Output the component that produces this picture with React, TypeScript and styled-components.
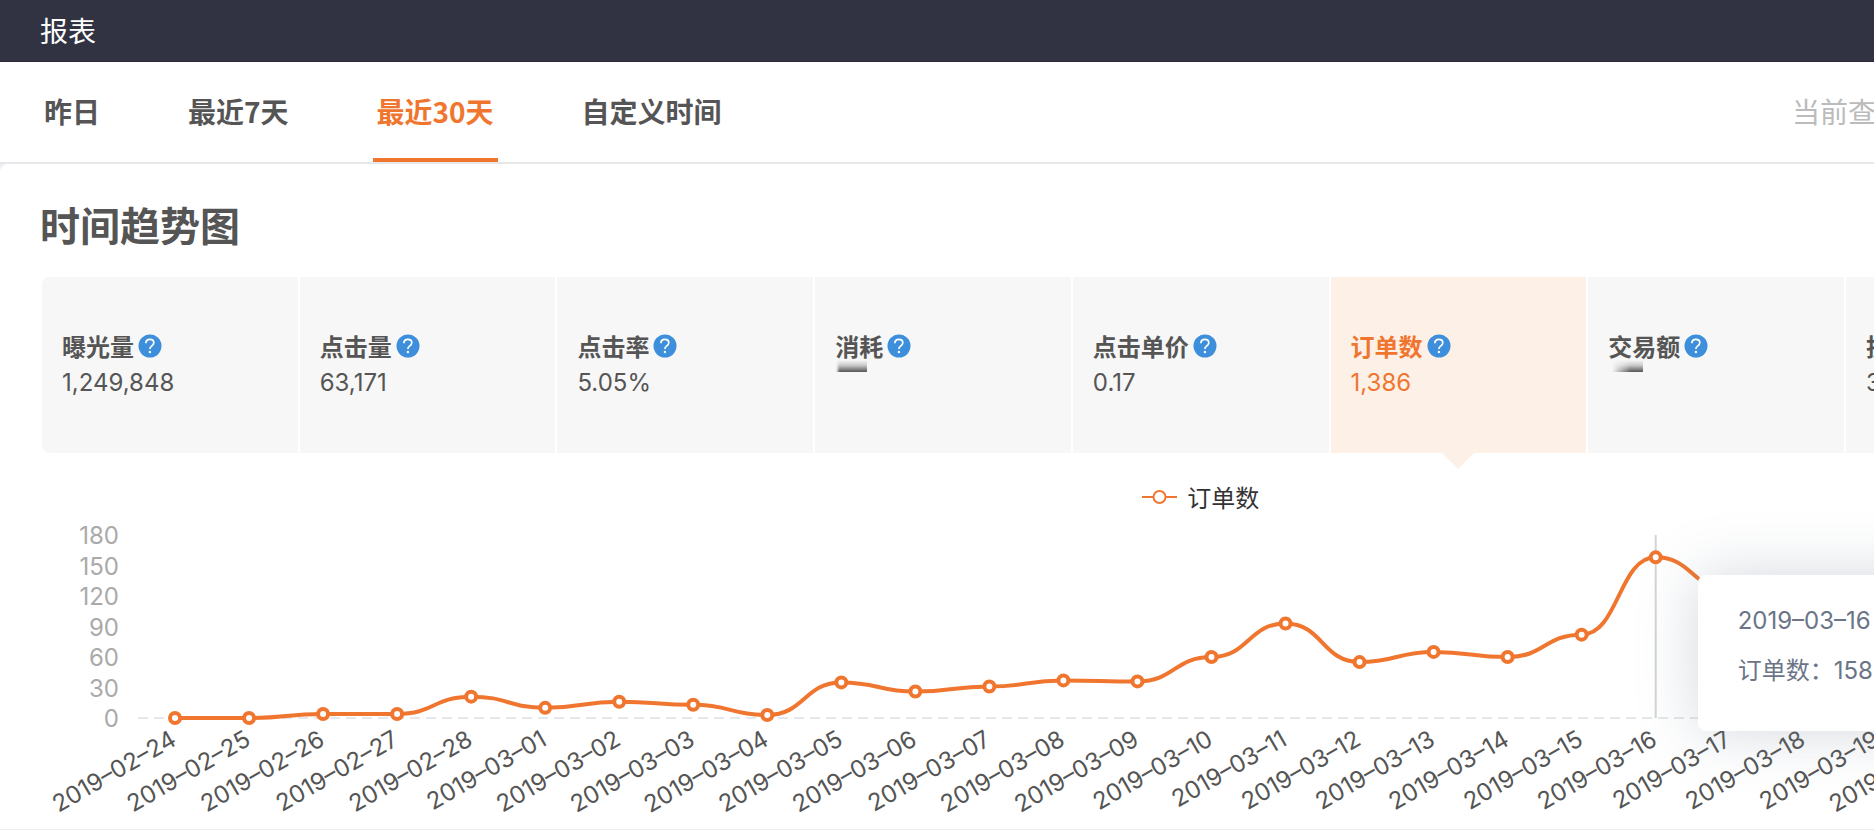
import React, { useLayoutEffect, useRef, useState } from 'react';
import styled, { createGlobalStyle, css } from 'styled-components';

const orange = '#f0762f';
const ink = '#555';
const numerals = '"Inter", "Noto Sans CJK SC", sans-serif';

const GlobalStyle = createGlobalStyle`
  *, *::before, *::after { box-sizing: border-box; }
  body {
    margin: 0;
    background: #fff;
    color: ${ink};
    font-family: "Noto Sans CJK SC", sans-serif;
    font-size: 24px;
    line-height: 36px;
    overflow-x: hidden;
  }
  button { font: inherit; color: inherit; background: none; border: 0; padding: 0; cursor: pointer; }
`;

const Page = styled.div`
  min-height: 100vh;
  overflow: hidden;
  background: #eceef3;
`;

const TopBar = styled.header`
  display: flex;
  align-items: center;
  height: 62px;
  padding: 0 40px 2px;
  background: #313342;
  color: #fff;
  font-size: 28px;
  border-bottom: 1px solid #2f2838;
`;

const Toolbar = styled.div`
  display: flex;
  height: 102px;
  padding-left: 40px;
  background: #fff;
  border-bottom: 2px solid #e6e7e9;
  overflow: hidden;
`;

const Tabs = styled.nav`
  display: flex;
  flex: 1;
  gap: 80px;
`;

const Tab = styled.button<{ $active?: boolean }>`
  padding: 0 4px 2px;
  border-top: 4px solid transparent;
  border-bottom: 4px solid ${p => (p.$active ? orange : 'transparent')};
  color: ${p => (p.$active ? orange : ink)};
  font-size: 28px;
  font-weight: 700;
  white-space: nowrap;
`;

const QueryNote = styled.div`
  display: flex;
  align-items: center;
  width: 82px;
  padding-bottom: 2px;
  color: #bbb;
  font-size: 28px;
  white-space: nowrap;
`;

const Panel = styled.main`
  padding: 32px 0 30px 42px;
  background: #fff;
  border-top-left-radius: 8px;
`;

const Title = styled.h1`
  margin: 0 0 25px -2px;
  font-size: 40px;
  line-height: 56px;
  font-weight: 700;
`;

/* Seven metrics fit the window; the strip goes on to hold all nine. */
const Strip = styled.div`
  width: calc((100% - 42px) / 7 * 9 + 16px);
`;

const Metrics = styled.div`
  display: grid;
  grid-template-columns: repeat(9, minmax(0, 1fr));
  gap: 2px;
`;

const Card = styled.div<{ $active?: boolean }>`
  position: relative;
  display: flex;
  flex-direction: column;
  justify-content: center;
  height: 176px;
  padding: 0 20px;
  background: #f7f7f7;
  white-space: nowrap;
  &:first-child { border-radius: 8px 0 0 8px; }
  ${p => p.$active && css`
    background: #fdf0e6;
    color: ${orange};
    &::after {
      content: "";
      position: absolute;
      left: calc(50% - 16px);
      top: 100%;
      border: 16px solid transparent;
      border-top-color: #fdf0e6;
      border-bottom: 0;
    }
  `}
`;

const CardLabel = styled.div`
  display: flex;
  align-items: center;
  gap: 4px;
  padding-bottom: 2px;
  line-height: 34px;
  font-weight: 700;
`;

const CardValue = styled.div`
  height: 36px;
  font-family: ${numerals};
`;

const Smudge = styled.div<{ $fadeLeft?: boolean }>`
  width: 31px;
  height: 12px;
  margin: -5px 0 0 ${p => (p.$fadeLeft ? 4 : 1)}px;
  background:
    linear-gradient(to right, #f7f7f7, rgba(247, 247, 247, 0) ${p => (p.$fadeLeft ? 60 : 12)}%),
    linear-gradient(#f7f7f7, #c8c8c8 45%, #555);
`;

const HelpButton = styled.button`
  display: flex;
`;

const ChartBox = styled.figure`
  position: relative;
  margin: 0;
`;

const Legend = styled.figcaption`
  display: flex;
  justify-content: center;
  align-items: center;
  gap: 10px;
  padding-top: 26px;
  color: #333;
`;

const Plot = styled.svg`
  display: block;
  width: 100%;
  height: 284px;
  overflow: visible;
  font-family: ${numerals};
`;

const Tooltip = styled.div`
  position: absolute;
  top: 122px;
  width: 260px;
  padding: 21px 40px 35px;
  background: #fff;
  border-radius: 8px;
  box-shadow: 0 0 60px rgba(110, 125, 145, 0.3);
  color: #6b7587;
  font-family: ${numerals};
  line-height: 50px;
  white-space: nowrap;
`;

function Help({ about }: { about: string }) {
  return (
    <HelpButton type="button" aria-label={`${about}说明`}>
      <svg width="24" height="24" viewBox="0 0 24 24" aria-hidden="true">
        <circle cx="12" cy="12" r="11.5" fill="#3d8fdb" />
        <path d="M7.9 9.2c0-2.3 1.6-3.8 4-3.8s3.9 1.4 3.9 3.4c0 1.5-.8 2.3-2 3.1-1.2.9-1.9 1.5-1.9 3.2" fill="none" stroke="#fff" strokeWidth="1.7" />
        <circle cx="11.9" cy="18" r="1.2" fill="#fff" />
      </svg>
    </HelpButton>
  );
}

const metrics: { label: string; value?: string; active?: boolean; fadeLeft?: boolean }[] = [
  { label: '曝光量', value: '1,249,848' },
  { label: '点击量', value: '63,171' },
  { label: '点击率', value: '5.05%' },
  { label: '消耗' },
  { label: '点击单价', value: '0.17' },
  { label: '订单数', value: '1,386', active: true },
  { label: '交易额', fadeLeft: true },
  { label: '投', value: '3' },
];

const orders: [string, number][] = [
  ['02–24', 0], ['02–25', 0], ['02–26', 4], ['02–27', 4], ['02–28', 21],
  ['03–01', 10], ['03–02', 16], ['03–03', 13], ['03–04', 3], ['03–05', 35],
  ['03–06', 26], ['03–07', 31], ['03–08', 37], ['03–09', 36], ['03–10', 60],
  ['03–11', 93], ['03–12', 55], ['03–13', 65], ['03–14', 60], ['03–15', 82],
  ['03–16', 158], ['03–17', 126], ['03–18', 110], ['03–19', 96], ['03–20', 90],
];

const DAYS = 30;
const AXIS_LEFT = 96;
const ZERO_Y = 203;
const UNIT = 183 / 180;
const HOVERED = 20;

function TrendChart() {
  const box = useRef<HTMLElement>(null);
  const [width, setWidth] = useState(2317);

  useLayoutEffect(() => {
    const el = box.current;
    if (!el) return;
    const measure = () => setWidth(el.clientWidth);
    measure();
    const observer = new ResizeObserver(measure);
    observer.observe(el);
    return () => observer.disconnect();
  }, []);

  const step = (width - AXIS_LEFT) / DAYS;
  const points = orders.map(([day, value], i) => ({
    day,
    x: AXIS_LEFT + step * (i + 0.5),
    y: ZERO_Y - value * UNIT,
  }));
  const line = points.reduce((d, p, i) => {
    if (i === 0) return `M${p.x},${p.y}`;
    const q = points[i - 1];
    const mid = (p.x + q.x) / 2;
    return `${d}C${mid},${q.y} ${mid},${p.y} ${p.x},${p.y}`;
  }, '');
  const hovered = points[HOVERED];

  return (
    <ChartBox ref={box}>
      <Legend>
        <svg width="35" height="16" viewBox="0 0 35 16" aria-hidden="true">
          <path d="M0 8h35" stroke={orange} strokeWidth="2" />
          <circle cx="17.5" cy="8" r="6" fill="#fff" stroke={orange} strokeWidth="2" />
        </svg>
        订单数
      </Legend>
      <Plot role="img" aria-label="订单数">
        {[0, 30, 60, 90, 120, 150, 180].map(v => (
          <text key={v} x="77" y={ZERO_Y - v * UNIT + 9} textAnchor="end" fill="#aaa">{v}</text>
        ))}
        <path d={`M${AXIS_LEFT} ${ZERO_Y}H${width}`} stroke="#e4e8ec" strokeWidth="2" strokeDasharray="10 6" />
        <path d={`M${hovered.x} 20V${ZERO_Y}`} stroke="#d4d4d4" strokeWidth="2" />
        <path d={line} fill="none" stroke={orange} strokeWidth="4" />
        {points.map(p => (
          <circle key={p.day} cx={p.x} cy={p.y} r="5" fill="#fff" stroke={orange} strokeWidth="4" />
        ))}
        {points.map(p => (
          <text key={p.day} textAnchor="end" fill={ink} transform={`translate(${p.x + 3} ${ZERO_Y + 26}) rotate(-30)`}>
            2019–{p.day}
          </text>
        ))}
      </Plot>
      <Tooltip style={{ left: hovered.x + 42 }}>
        <div>2019–03–16</div>
        <div>订单数：158</div>
      </Tooltip>
    </ChartBox>
  );
}

export default function App() {
  return (
    <Page lang="zh-CN">
      <GlobalStyle />
      <TopBar>报表</TopBar>
      <Toolbar>
        <Tabs>
          <Tab type="button">昨日</Tab>
          <Tab type="button">最近7天</Tab>
          <Tab type="button" $active aria-current="true">最近30天</Tab>
          <Tab type="button">自定义时间</Tab>
        </Tabs>
        <QueryNote>当前查</QueryNote>
      </Toolbar>
      <Panel>
        <Title>时间趋势图</Title>
        <Strip>
          <Metrics>
            {metrics.map(m => (
              <Card key={m.label} $active={m.active}>
                <CardLabel>{m.label}<Help about={m.label} /></CardLabel>
                <CardValue>{m.value ?? <Smudge $fadeLeft={m.fadeLeft} />}</CardValue>
              </Card>
            ))}
          </Metrics>
          <TrendChart />
        </Strip>
      </Panel>
    </Page>
  );
}
